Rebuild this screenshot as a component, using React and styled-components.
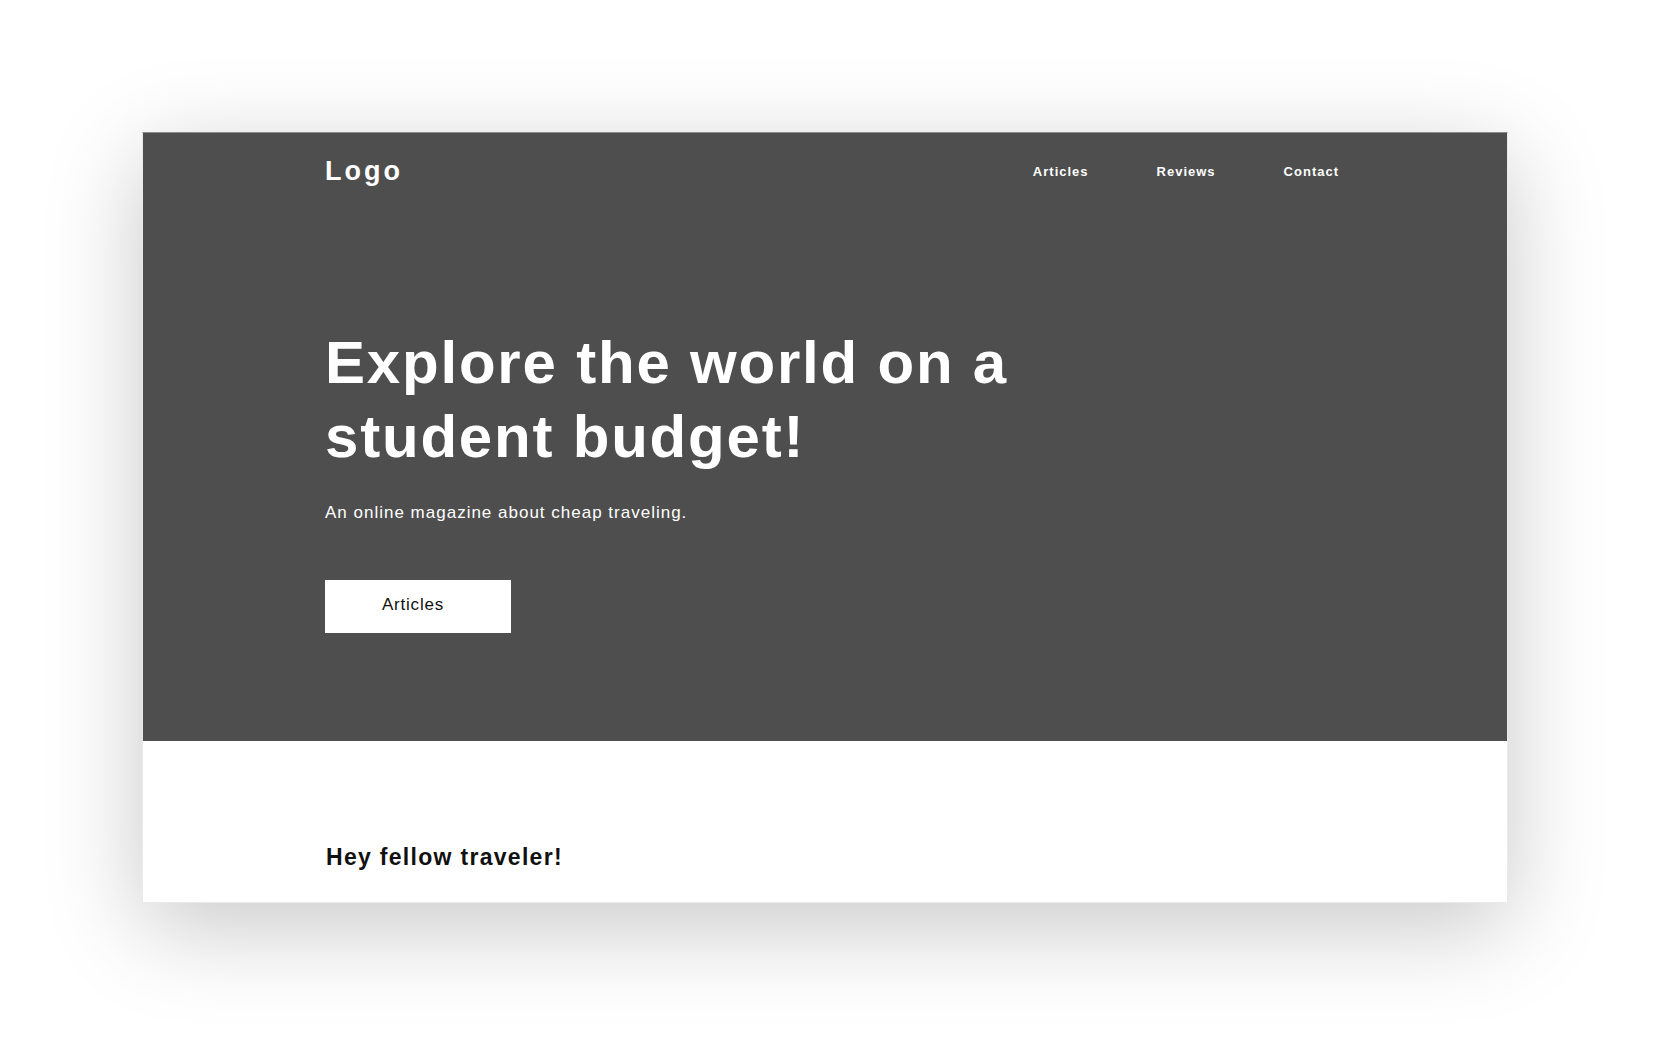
import React from "react";
import styled, { createGlobalStyle } from "styled-components";

const GlobalStyle = createGlobalStyle`
  html, body {
    margin: 0;
    padding: 0;
    background: #ffffff;
  }

  body {
    font-family: "Liberation Sans", Arial, Helvetica, sans-serif;
  }
`;

const Page = styled.div`
  padding: 132px 0 0 142px;
  height: 1056px;
  box-sizing: border-box;
  overflow: hidden;
`;

const Frame = styled.div`
  width: 1366px;
  height: 771px;
  box-sizing: border-box;
  border: 1px solid rgba(0, 0, 0, 0.08);
  border-top-color: #8c8c8c;
  background: #ffffff;
  box-shadow: 0 24px 90px rgba(0, 0, 0, 0.22);
  overflow: hidden;
`;

const Hero = styled.section`
  background-color: #4e4e4e;
  height: 608px;
  padding: 23px 168px 0 182px;
  box-sizing: border-box;
  color: #ffffff;
`;

const Header = styled.header`
  display: flex;
  align-items: flex-start;
  justify-content: space-between;
`;

const Logo = styled.div`
  font-size: 27px;
  line-height: 31px;
  font-weight: 700;
  letter-spacing: 3px;
`;

const Nav = styled.nav`
  display: flex;
  gap: 68px;
  padding-top: 8px;
`;

const NavLink = styled.a`
  color: #ffffff;
  font-size: 13px;
  line-height: 15px;
  font-weight: 700;
  letter-spacing: 1px;
  text-decoration: none;
`;

const Title = styled.h1`
  margin: 139px 0 0;
  font-size: 60px;
  line-height: 74px;
  font-weight: 700;
  letter-spacing: 1.8px;
`;

const Subtitle = styled.p`
  margin: 27px 0 0;
  font-size: 17px;
  line-height: 24px;
  letter-spacing: 1px;
`;

const Button = styled.button`
  margin-top: 55px;
  width: 186px;
  height: 53px;
  border: none;
  background: #ffffff;
  color: #111111;
  font-family: inherit;
  font-size: 17px;
  letter-spacing: 0.8px;
  padding: 0 10px 4px 0;
  cursor: pointer;
`;

const Intro = styled.section`
  padding: 103px 0 0 183px;
`;

const IntroHeading = styled.h2`
  margin: 0;
  font-size: 23px;
  line-height: 26px;
  font-weight: 700;
  letter-spacing: 1.3px;
  color: #111111;
`;

export default function App() {
  return (
    <Page>
      <GlobalStyle />
      <Frame>
        <Hero>
          <Header>
            <Logo>Logo</Logo>
            <Nav>
              <NavLink href="#articles">Articles</NavLink>
              <NavLink href="#reviews">Reviews</NavLink>
              <NavLink href="#contact">Contact</NavLink>
            </Nav>
          </Header>
          <Title>
            Explore the world on a
            <br />
            student budget!
          </Title>
          <Subtitle>An online magazine about cheap traveling.</Subtitle>
          <Button>Articles</Button>
        </Hero>
        <Intro>
          <IntroHeading>Hey fellow traveler!</IntroHeading>
        </Intro>
      </Frame>
    </Page>
  );
}
